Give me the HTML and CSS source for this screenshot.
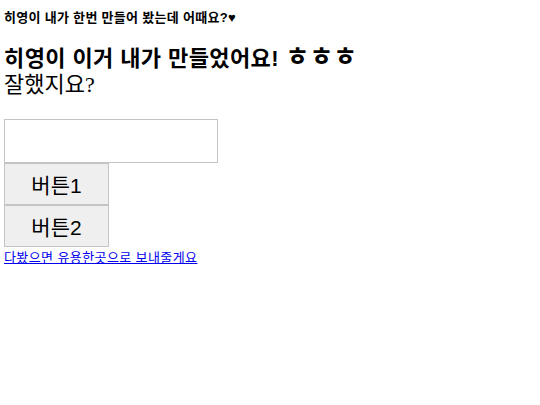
FILE: index.html
```html
<!DOCTYPE html>
<html lang="ko">

<head>
    <meta charset="UTF-8">
    <meta name="viewport" content="width=device-width, initial-scale=1.0">
    <title>히영이</title>
    <link rel="stylesheet" href="styles.css">
</head>

<body>
    <p class="intro">히영이 내가 한번 만들어 봤는데 어때요?♥</p>

    <h1>히영이 이거 내가 만들었어요! <span class="laugh">ㅎㅎㅎ</span></h1>
    <p class="sub">잘했지요?</p>

    <div class="form">
        <input type="text" class="box">
        <button>버튼1</button>
        <button>버튼2</button>
    </div>
    <a href="#">다봤으면 유용한곳으로 보내줄게요</a>
</body>

</html>
```

FILE: styles.css
```css
body {
    margin: 4px;
    font-family: "Liberation Serif", "Noto Sans CJK KR", serif;
    color: #000;
}

.intro {
    margin: 3px 0 0;
    font-family: "Liberation Sans", "Noto Sans CJK KR", sans-serif;
    font-size: 13px;
    letter-spacing: 0.3px;
    font-weight: bold;
}

h1 {
    margin: 20px 0 0;
    font-family: "Liberation Sans", "Noto Sans CJK KR", sans-serif;
    font-size: 22px;
    line-height: 26px;
    letter-spacing: 0.4px;
}

.laugh {
    font-size: 26px;
    line-height: 20px;
    letter-spacing: 0;
}

.sub {
    margin: 0;
    font-size: 22px;
    line-height: 26px;
}

.form {
    display: flex;
    flex-direction: column;
    align-items: flex-start;
    margin-top: 21px;
}

.box {
    width: 214px;
    height: 44px;
    box-sizing: border-box;
    border: 1px solid #c4c4c4;
    margin: 0;
}

button {
    width: 105px;
    height: 42px;
    margin: 0;
    font-family: "Liberation Sans", "Noto Sans CJK KR", sans-serif;
    font-size: 21px;
    background: #efefef;
    border: 1px solid #c4c4c4;
    color: #000;
}

a {
    font-family: "Liberation Sans", "Noto Sans CJK KR", sans-serif;
    font-size: 13px;
    letter-spacing: 0.4px;
    color: #0000ee;
}
```
